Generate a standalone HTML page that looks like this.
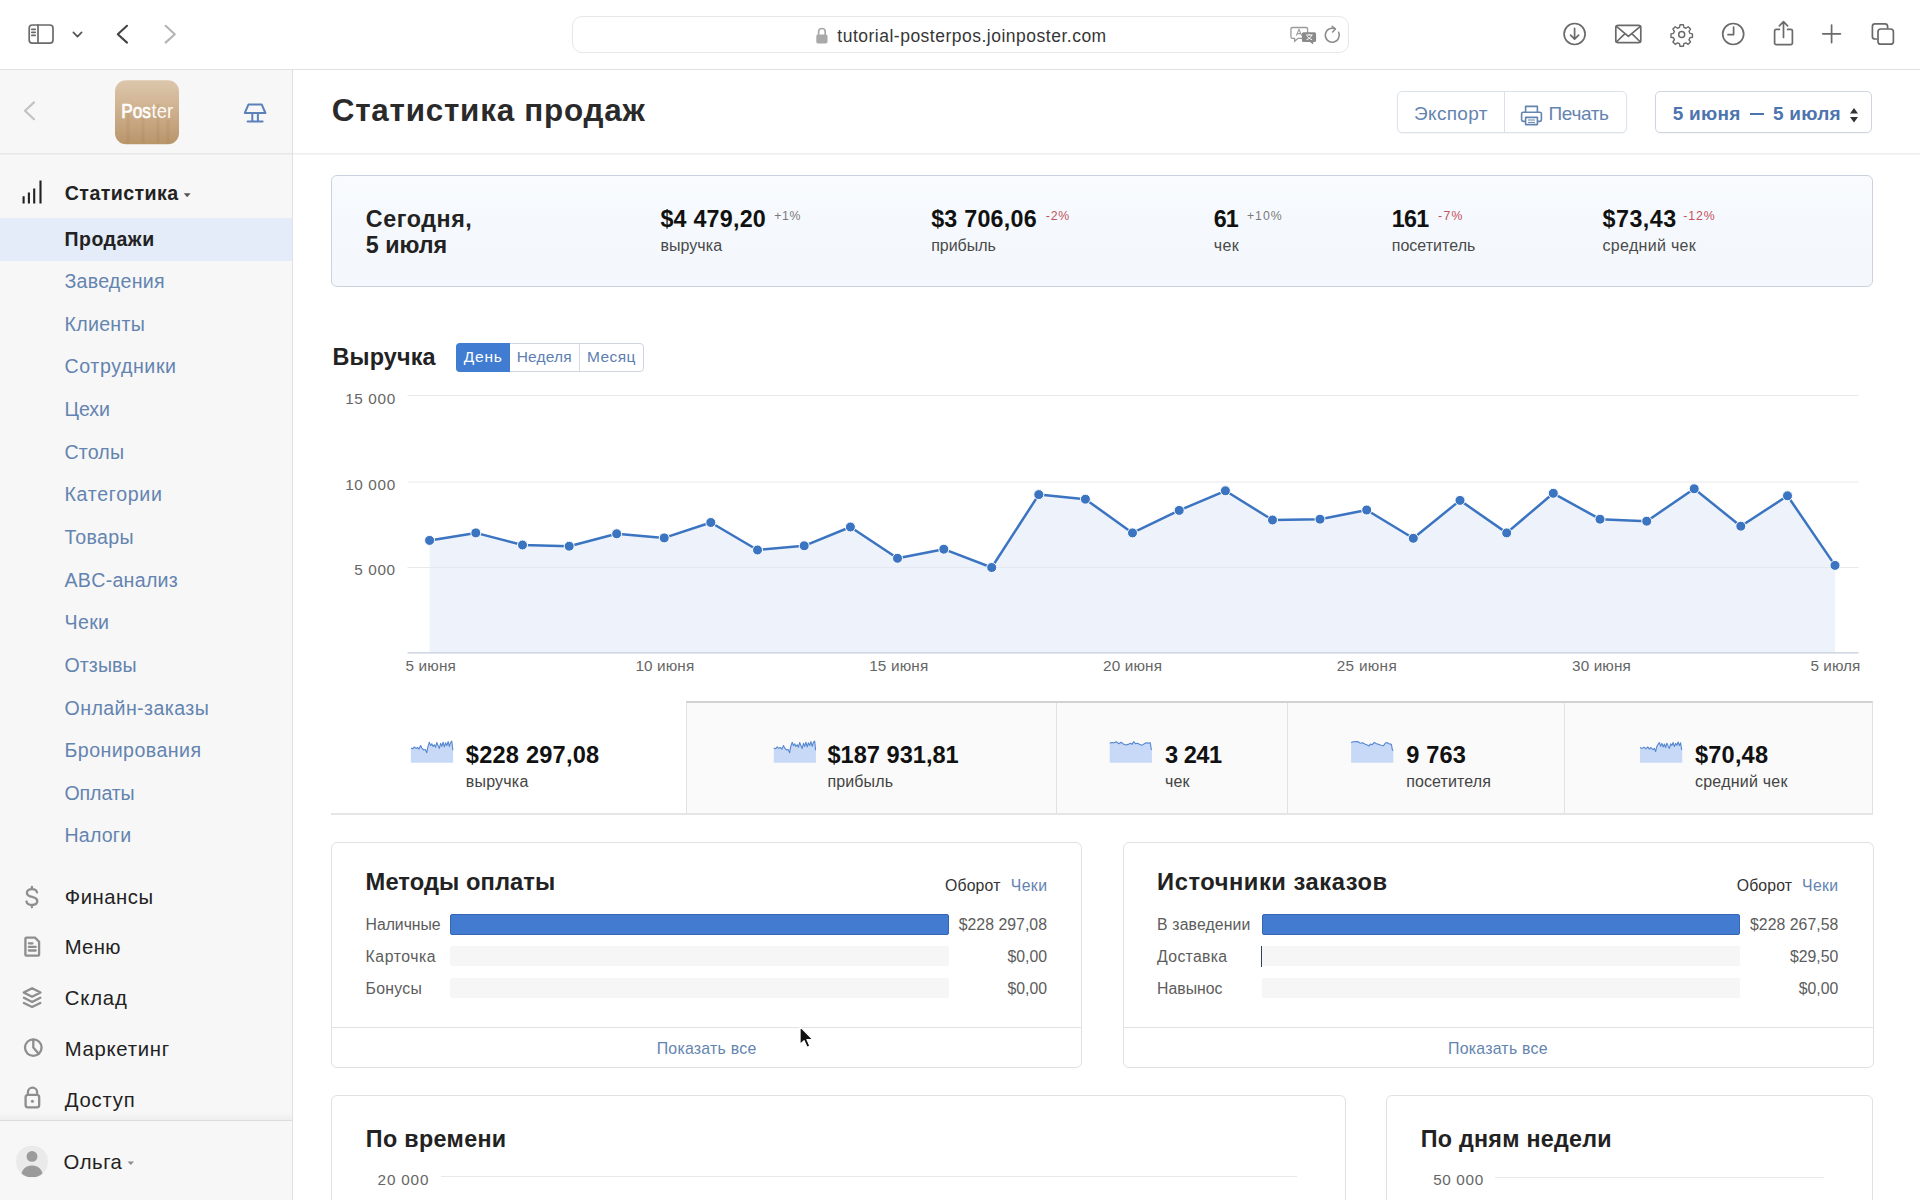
<!DOCTYPE html>
<html lang="ru">
<head>
<meta charset="utf-8">
<title>Статистика продаж</title>
<style>
*{box-sizing:border-box;margin:0;padding:0}
html,body{width:1920px;height:1200px;overflow:hidden;background:#fff}
body{font-family:"Liberation Sans",sans-serif;color:#222;position:relative}
.abs{position:absolute}
.t{position:absolute;white-space:nowrap;line-height:1}
svg{position:absolute;overflow:visible}
#tb{position:absolute;left:0;top:0;width:1920px;height:70px;background:#fff;border-bottom:1px solid #e0e0e0}
#url{position:absolute;left:572px;top:16px;width:777px;height:37px;border:1px solid #e7e7e7;border-radius:10px;background:#fff}
#sb{position:absolute;left:0;top:70px;width:293px;height:1130px;background:#f7f7f7;border-right:1px solid #e0e0e0}
#sbh{position:absolute;left:0;top:153px;width:292px;height:2px;background:linear-gradient(#e7e7e7 50%,#eeeeee 50%)}
#sel{position:absolute;left:0;top:218px;width:292px;height:42.5px;background:#e3ecf8}
#sbdiv{position:absolute;left:0;top:1112px;width:292px;height:9px;border-bottom:1px solid #dcdcdc;background:linear-gradient(#f7f7f7,#efefef)}
#mh{position:absolute;left:293px;top:153px;width:1627px;height:2px;background:linear-gradient(#efefef 50%,#f4f4f4 50%)}
#today{position:absolute;left:331px;top:175px;width:1542px;height:112px;background:linear-gradient(#f9fbfe,#f5f9fd 40%,#f4f8fd);border:1px solid #cbd1e0;border-radius:6px}
.btn{position:absolute;border:1px solid #dce2ec;border-radius:5px;background:#fff;box-shadow:0 1px 1px rgba(0,0,0,.04)}
.card{position:absolute;border:1px solid #e1e1e1;border-radius:6px;background:#fff}
</style>
</head>
<body>
<!-- ===== BROWSER TOOLBAR ===== -->
<div id="tb"></div>
<div id="url"></div>
<svg style="left:0;top:0" width="320" height="70" viewBox="0 0 320 70">
<rect x="29.2" y="25" width="23.8" height="18.2" rx="3.2" fill="none" stroke="#6a6a6a" stroke-width="1.7" stroke-linecap="round" stroke-linejoin="round" stroke-width="1.9"/>
<path d="M38 25.2V43" fill="none" stroke="#6a6a6a" stroke-width="1.7" stroke-linecap="round" stroke-linejoin="round" stroke-width="1.7"/>
<path d="M31.8 29.3h3.4M31.8 32.3h3.4M31.8 35.3h3.4" fill="none" stroke="#6a6a6a" stroke-width="1.7" stroke-linecap="round" stroke-linejoin="round" stroke-width="1.1"/>
<path d="M73.4 32.4l4.1 4.2 4.1-4.2" fill="none" stroke="#555" stroke-width="1.7" stroke-linecap="round" stroke-linejoin="round"/>
<path d="M127 25.8l-9.2 8.4 9.2 8.4" fill="none" stroke="#444" stroke-width="2.1" stroke-linecap="round" stroke-linejoin="round"/>
<path d="M165.6 25.8l9.2 8.4-9.2 8.4" fill="none" stroke="#b4b4b4" stroke-width="2.1" stroke-linecap="round" stroke-linejoin="round"/>
</svg>
<svg style="left:810px;top:20px" width="30" height="30" viewBox="810 20 30 30">
<path d="M818.6 35v-3.2a3.3 3.3 0 0 1 6.6 0V35" fill="none" stroke="#a9a9a9" stroke-width="1.7"/>
<rect x="816.3" y="34.4" width="11.2" height="9" rx="1.6" fill="#a9a9a9"/>
</svg>
<div class="t" style="left:837.3px;top:28.0px;font-size:17.5px;color:#363636;letter-spacing:0.50px;">tutorial-posterpos.joinposter.com</div>
<svg style="left:1286px;top:20px" width="60" height="30" viewBox="1286 20 60 30">
<path d="M1292.5 27.5h13.5a1.6 1.6 0 0 1 1.6 1.6v7.6a1.6 1.6 0 0 1-1.6 1.6h-8l-3.4 3v-3h-2.1a1.6 1.6 0 0 1-1.6-1.6v-7.6a1.6 1.6 0 0 1 1.6-1.6z" fill="#fff" stroke="#9a9a9a" stroke-width="1.3"/>
<path d="M1296.3 35.6l2.7-6.2 2.7 6.2M1297.3 33.6h3.4" fill="none" stroke="#9a9a9a" stroke-width="1.1"/>
<path d="M1303.5 32.2h11a1.6 1.6 0 0 1 1.6 1.6v6.6a1.6 1.6 0 0 1-1.6 1.6h-1.3v2.6l-3.2-2.6h-6.5a1.6 1.6 0 0 1-1.6-1.6v-6.6a1.6 1.6 0 0 1 1.6-1.6z" fill="#8a8a8a"/>
<path d="M1306 35h6.6M1309.3 34v1M1311.6 35c-.6 2.2-2.6 4-5 4.6M1307.3 36.2c.8 1.6 2.6 2.9 4.8 3.4" fill="none" stroke="#fff" stroke-width="1"/>
<path d="M1338.6 32.2a7 7 0 1 1-3.6-3.4" fill="none" stroke="#8a8a8a" stroke-width="1.5" stroke-linecap="round"/>
<path d="M1332.2 26.4l3.3 2.6-2.9 3" fill="none" stroke="#8a8a8a" stroke-width="1.5" stroke-linecap="round" stroke-linejoin="round"/>
</svg>
<svg style="left:1540px;top:0" width="380" height="70" viewBox="1540 0 380 70">
<circle cx="1574.6" cy="34" r="10.5" fill="none" stroke="#6a6a6a" stroke-width="1.7" stroke-linecap="round" stroke-linejoin="round"/>
<path d="M1574.6 28.4v10.6M1570.6 35.2l4 4 4-4" fill="none" stroke="#6a6a6a" stroke-width="1.7" stroke-linecap="round" stroke-linejoin="round"/>
<rect x="1615.8" y="25.4" width="25" height="17.2" rx="2.4" fill="none" stroke="#6a6a6a" stroke-width="1.7" stroke-linecap="round" stroke-linejoin="round"/>
<path d="M1616.4 26.4l12 10 12-10M1616.4 42l8.6-8.4M1640.4 42l-8.6-8.4" fill="none" stroke="#6a6a6a" stroke-width="1.7" stroke-linecap="round" stroke-linejoin="round" stroke-width="1.4"/>
<g transform="translate(1681.7 34.4) scale(.88)" fill="none" stroke="#6a6a6a" stroke-width="1.7" stroke-linecap="round" stroke-linejoin="round">
<circle r="3.4"/>
<path d="M-1.9 -10.9h3.8l.6 2.9 2.3 1 2.5-1.7 2.7 2.7-1.7 2.5 1 2.3 2.9.6v3.8l-2.9.6-1 2.3 1.7 2.5-2.7 2.7-2.5-1.7-2.3 1-.6 2.9h-3.8l-.6-2.9-2.3-1-2.5 1.7-2.7-2.7 1.7-2.5-1-2.3-2.9-.6v-3.8l2.9-.6 1-2.3-1.7-2.5 2.7-2.7 2.5 1.7 2.3-1z" stroke-width="1.6"/>
</g>
<circle cx="1733.2" cy="34" r="10.5" fill="none" stroke="#6a6a6a" stroke-width="1.7" stroke-linecap="round" stroke-linejoin="round"/>
<path d="M1733.6 27.2v7.4h-5.6" fill="none" stroke="#6a6a6a" stroke-width="1.7" stroke-linecap="round" stroke-linejoin="round"/>
<path d="M1779.4 29.4h-3.2a1.6 1.6 0 0 0-1.6 1.6v12a1.6 1.6 0 0 0 1.6 1.6h14.6a1.6 1.6 0 0 0 1.6-1.6v-12a1.6 1.6 0 0 0-1.6-1.6h-3.2" fill="none" stroke="#6a6a6a" stroke-width="1.7" stroke-linecap="round" stroke-linejoin="round"/>
<path d="M1783.5 37.4V22M1779.4 25.8l4.1-4.1 4.1 4.1" fill="none" stroke="#6a6a6a" stroke-width="1.7" stroke-linecap="round" stroke-linejoin="round"/>
<path d="M1831.6 25v17.6M1822.8 33.8h17.6" fill="none" stroke="#6a6a6a" stroke-width="1.7" stroke-linecap="round" stroke-linejoin="round" stroke-width="1.8"/>
<path d="M1876.6 39h-1.6a2.6 2.6 0 0 1-2.6-2.6v-10a2.6 2.6 0 0 1 2.6-2.6h10a2.6 2.6 0 0 1 2.6 2.6v1.6" fill="none" stroke="#6a6a6a" stroke-width="1.7" stroke-linecap="round" stroke-linejoin="round"/>
<rect x="1878" y="29" width="15.4" height="15.2" rx="2.8" fill="none" stroke="#6a6a6a" stroke-width="1.7" stroke-linecap="round" stroke-linejoin="round"/>
</svg>
<!-- ===== SIDEBAR ===== -->
<div id="sb"></div>
<div id="sbh"></div>
<div id="sel"></div>
<svg style="left:0;top:70px" width="292" height="84" viewBox="0 70 292 84">
<path d="M34 102.4l-9 8.4 9 8.4" fill="none" stroke="#c2c2c2" stroke-width="2.2" stroke-linecap="round" stroke-linejoin="round"/>
<defs><linearGradient id="wood" x1="0" y1="0" x2="0" y2="1"><stop offset="0" stop-color="#dcc7ac"/><stop offset=".45" stop-color="#cfb18f"/><stop offset="1" stop-color="#b9956a"/></linearGradient></defs>
<rect x="115" y="80.3" width="64" height="64" rx="11" fill="url(#wood)"/>
<g opacity=".10" stroke="#8a6238" stroke-width="3"><path d="M128 112v31M143 118v25M158 104v39M168 120v23"/></g>
<g fill="none" stroke="#5c80b8" stroke-width="2" stroke-linejoin="round" stroke-linecap="round">
<path d="M248.4 104.6h13.4l3.6 8.4h-20.6z"/><path d="M252.3 113.4v7.8M257.9 113.4v7.8M247.6 121.6h15"/></g>
</svg>
<svg style="left:115px;top:98px" width="64" height="26" viewBox="115 98 64 26"><text x="121.3" y="117.9" font-family="Liberation Sans, sans-serif" font-size="19.6" fill="#fff" stroke="#fff" stroke-width=".7" textLength="29.6" lengthAdjust="spacingAndGlyphs">Pos</text><text x="151.5" y="117.9" font-family="Liberation Sans, sans-serif" font-size="19.6" fill="#fff" fill-opacity=".95" textLength="21.6" lengthAdjust="spacingAndGlyphs">ter</text></svg>
<svg style="left:0;top:170px" width="60" height="40" viewBox="0 170 60 40">
<path d="M23.6 196.2v7.4M28.9 192.4v11.2M34.2 188.6v15M40.5 180.6v23" fill="none" stroke="#222" stroke-width="2.1"/></svg>
<div class="t" style="left:64.8px;top:184.0px;font-size:19.6px;font-weight:bold;color:#222;letter-spacing:0.42px;">Статистика</div>
<svg style="left:183px;top:190px" width="10" height="10" viewBox="183 190 10 10"><path d="M183.8 193.2h6.8l-3.4 4z" fill="#555"/></svg>
<div class="t" style="left:64.5px;top:230.0px;font-size:19.5px;font-weight:bold;color:#222;letter-spacing:0.50px;">Продажи</div>
<div class="t" style="left:64.5px;top:272.0px;font-size:19.6px;color:#6484b0;letter-spacing:0.24px;">Заведения</div>
<div class="t" style="left:64.5px;top:315.0px;font-size:19.6px;color:#6484b0;letter-spacing:0.29px;">Клиенты</div>
<div class="t" style="left:64.5px;top:357.0px;font-size:19.6px;color:#6484b0;letter-spacing:0.60px;">Сотрудники</div>
<div class="t" style="left:64.5px;top:400.0px;font-size:19.6px;color:#6484b0;letter-spacing:-0.10px;">Цехи</div>
<div class="t" style="left:64.5px;top:443.0px;font-size:19.6px;color:#6484b0;letter-spacing:0.15px;">Столы</div>
<div class="t" style="left:64.5px;top:485.0px;font-size:19.6px;color:#6484b0;letter-spacing:0.68px;">Категории</div>
<div class="t" style="left:64.5px;top:528.0px;font-size:19.6px;color:#6484b0;letter-spacing:0.34px;">Товары</div>
<div class="t" style="left:64.5px;top:571.0px;font-size:19.6px;color:#6484b0;letter-spacing:0.28px;">ABC-анализ</div>
<div class="t" style="left:64.5px;top:613.0px;font-size:19.6px;color:#6484b0;letter-spacing:0.34px;">Чеки</div>
<div class="t" style="left:64.5px;top:656.0px;font-size:19.6px;color:#6484b0;letter-spacing:0.08px;">Отзывы</div>
<div class="t" style="left:64.5px;top:699.0px;font-size:19.6px;color:#6484b0;letter-spacing:0.41px;">Онлайн-заказы</div>
<div class="t" style="left:64.5px;top:741.0px;font-size:19.6px;color:#6484b0;letter-spacing:0.44px;">Бронирования</div>
<div class="t" style="left:64.5px;top:784.0px;font-size:19.6px;color:#6484b0;letter-spacing:-0.12px;">Оплаты</div>
<div class="t" style="left:64.5px;top:826.0px;font-size:19.6px;color:#6484b0;letter-spacing:0.18px;">Налоги</div>
<div class="t" style="left:64.7px;top:887.0px;font-size:20.3px;color:#222;letter-spacing:0.54px;">Финансы</div>
<div class="t" style="left:64.7px;top:937.0px;font-size:20.3px;color:#222;letter-spacing:0.29px;">Меню</div>
<div class="t" style="left:64.7px;top:988.0px;font-size:20.3px;color:#222;letter-spacing:0.85px;">Склад</div>
<div class="t" style="left:64.7px;top:1039.0px;font-size:20.3px;color:#222;letter-spacing:0.72px;">Маркетинг</div>
<div class="t" style="left:64.7px;top:1090.0px;font-size:20.3px;color:#222;letter-spacing:0.79px;">Доступ</div>
<svg style="left:0;top:880px" width="60" height="240" viewBox="0 880 60 240">
<path d="M37 892.400c-.4-2.100-2.300-3.300-5.100-3.300-3 0-5 1.500-5 3.800 0 5.400 10.400 2.700 10.400 8.200 0 2.400-2.100 3.900-5.300 3.900-3 0-5-1.300-5.500-3.500M31.900 886.800v2.200M31.900 905.100v2.200" fill="none" stroke="#8e8e8e" stroke-width="2.3" stroke-linecap="round" stroke-linejoin="round"/>
<path d="M25.400 938.600a1 1 0 0 1 1-1h8.600l4.100 4.100v13a1 1 0 0 1-1 1h-11.700a1 1 0 0 1-1-1z" fill="none" stroke="#8e8e8e" stroke-width="2.3" stroke-linecap="round" stroke-linejoin="round"/>
<path d="M28.900 943.300h3.600M28.900 946.900h6.800M28.900 950.500h6.800" fill="none" stroke="#8e8e8e" stroke-width="2.3" stroke-linecap="round" stroke-linejoin="round" stroke-width="1.8"/>
<path d="M32.100 988.200l8.400 4.300-8.400 4.300-8.400-4.300z" fill="none" stroke="#8e8e8e" stroke-width="2.3" stroke-linecap="round" stroke-linejoin="round"/><path d="M23.900 997.800l8.200 4.200 8.200-4.200M23.900 1002.900l8.200 4.200 8.200-4.200" fill="none" stroke="#8e8e8e" stroke-width="2.3" stroke-linecap="round" stroke-linejoin="round"/>
<circle cx="33.300" cy="1047.600" r="8.300" fill="none" stroke="#8e8e8e" stroke-width="2.3" stroke-linecap="round" stroke-linejoin="round"/><path d="M33.300 1039.600v8l5.400 6.200" fill="none" stroke="#8e8e8e" stroke-width="2.3" stroke-linecap="round" stroke-linejoin="round"/>
<rect x="25.600" y="1094.800" width="13.600" height="12.600" rx="2.400" fill="none" stroke="#8e8e8e" stroke-width="2.3" stroke-linecap="round" stroke-linejoin="round"/><path d="M27.900 1094.600v-2.400a4.600 4.600 0 0 1 9.200 0v1" fill="none" stroke="#8e8e8e" stroke-width="2.3" stroke-linecap="round" stroke-linejoin="round"/><circle cx="32.400" cy="1101.300" r="1.500" fill="#8e8e8e"/>
</svg>
<div id="sbdiv"></div>
<svg style="left:14px;top:1144px" width="36" height="36" viewBox="14 1144 36 36">
<defs><clipPath id="avc"><circle cx="32" cy="1161.4" r="16"/></clipPath></defs>
<circle cx="32" cy="1161.4" r="16" fill="#eaeaea"/>
<g clip-path="url(#avc)" fill="#9b9b9b"><circle cx="32" cy="1156.4" r="5.4"/><path d="M21 1177c0-7 4.6-11.4 11-11.4s11 4.400 11 11.400z"/></g></svg>
<div class="t" style="left:63.6px;top:1152.0px;font-size:20.3px;color:#222;letter-spacing:0.53px;">Ольга</div>
<svg style="left:126px;top:1158px" width="10" height="10" viewBox="126 1158 10 10"><path d="M127.600 1161.400h6.400l-3.200 3.700z" fill="#8c8c8c"/></svg>
<!-- ===== MAIN HEADER ===== -->
<div id="mh"></div>
<div class="t" style="left:331.7px;top:95.0px;font-size:31.4px;font-weight:bold;color:#2a2a2a;letter-spacing:0.77px;">Статистика продаж</div>
<div class="btn" style="left:1397px;top:91px;width:230px;height:42px"></div><div class="abs" style="left:1504px;top:92px;width:1px;height:40px;background:#d9e0ea"></div>
<div class="t" style="left:1414.0px;top:104.0px;font-size:19px;color:#6484b0;letter-spacing:0.35px;">Экспорт</div>
<svg style="left:1519px;top:103px" width="26" height="26" viewBox="1519 103 26 26"><g fill="none" stroke="#6484b0" stroke-width="1.6" stroke-linejoin="round">
<path d="M1525.6 112v-5.600h11.800v5.600"/><path d="M1525.400 121.400h-2.200a1.600 1.600 0 0 1-1.600-1.600v-6a1.600 1.600 0 0 1 1.600-1.600h16.600a1.600 1.600 0 0 1 1.600 1.600v6a1.600 1.600 0 0 1-1.600 1.600h-2.200"/>
<rect x="1525.600" y="117.400" width="11.800" height="7.200"/><path d="M1528 120h7M1528 122.400h7" stroke-width="1"/></g></svg>
<div class="t" style="left:1548.5px;top:104.0px;font-size:19px;color:#6484b0;letter-spacing:-0.35px;">Печать</div>
<div class="btn" style="left:1655px;top:91px;width:217px;height:42px;border-color:#cfd6e2"></div>
<div class="t" style="left:1672.7px;top:104.0px;font-size:19px;font-weight:bold;color:#4c74ae;letter-spacing:0.27px;">5 июня</div>
<div class="abs" style="left:1750px;top:113px;width:13.5px;height:2px;background:#4c74ae"></div><div class="t" style="left:1773.0px;top:104.0px;font-size:19px;font-weight:bold;color:#4c74ae;letter-spacing:0.25px;">5 июля</div>
<svg style="left:1848px;top:104px" width="12" height="22" viewBox="1848 104 12 22"><path d="M1850 113.400l4-5.400 4 5.400zM1850 117l4 5.400 4-5.400z" fill="#333"/></svg>
<!-- ===== TODAY BOX ===== -->
<div id="today"></div>
<div class="t" style="left:365.8px;top:208.0px;font-size:23.3px;font-weight:bold;color:#222;letter-spacing:0.57px;">Сегодня,</div>
<div class="t" style="left:365.8px;top:234.0px;font-size:23.3px;font-weight:bold;color:#222;letter-spacing:-0.05px;">5 июля</div>
<div class="t" style="left:660.4px;top:208.0px;font-size:23.3px;font-weight:bold;color:#111;letter-spacing:0.22px;">$4 479,20</div>
<div class="t" style="left:774.2px;top:210.0px;font-size:12.3px;color:#7a7a7a;letter-spacing:0.62px;">+1%</div>
<div class="t" style="left:660.4px;top:238.0px;font-size:16px;color:#4a4a4a;letter-spacing:0.06px;">выручка</div>
<div class="t" style="left:931.2px;top:208.0px;font-size:23.3px;font-weight:bold;color:#111;letter-spacing:0.22px;">$3 706,06</div>
<div class="t" style="left:1045.8px;top:210.0px;font-size:12.3px;color:#c2525c;letter-spacing:0.76px;">-2%</div>
<div class="t" style="left:931.2px;top:238.0px;font-size:16px;color:#4a4a4a;letter-spacing:-0.04px;">прибыль</div>
<div class="t" style="left:1213.8px;top:208.0px;font-size:23.3px;font-weight:bold;color:#111;letter-spacing:-0.92px;">61</div>
<div class="t" style="left:1247.0px;top:210.0px;font-size:12.3px;color:#7a7a7a;letter-spacing:0.93px;">+10%</div>
<div class="t" style="left:1213.8px;top:238.0px;font-size:16px;color:#4a4a4a;letter-spacing:0.38px;">чек</div>
<div class="t" style="left:1391.7px;top:208.0px;font-size:23.3px;font-weight:bold;color:#111;letter-spacing:-0.69px;">161</div>
<div class="t" style="left:1438.0px;top:210.0px;font-size:12.3px;color:#c2525c;letter-spacing:1.31px;">-7%</div>
<div class="t" style="left:1391.7px;top:238.0px;font-size:16px;color:#4a4a4a;letter-spacing:0.03px;">посетитель</div>
<div class="t" style="left:1602.5px;top:208.0px;font-size:23.3px;font-weight:bold;color:#111;letter-spacing:0.50px;">$73,43</div>
<div class="t" style="left:1683.3px;top:210.0px;font-size:12.3px;color:#c2525c;letter-spacing:0.86px;">-12%</div>
<div class="t" style="left:1602.5px;top:238.0px;font-size:16px;color:#4a4a4a;letter-spacing:0.31px;">средний чек</div>
<!-- ===== REVENUE CHART ===== -->
<div class="t" style="left:332.5px;top:346.0px;font-size:23.4px;font-weight:bold;color:#222;letter-spacing:0.14px;">Выручка</div>
<div class="abs" style="left:456px;top:343px;width:188px;height:29px;border:1px solid #d0d5de;border-radius:4px;background:#fff"></div><div class="abs" style="left:456px;top:343px;width:54px;height:29px;background:#3f7cd2;border-radius:4px 0 0 4px"></div><div class="abs" style="left:579px;top:344px;width:1px;height:27px;background:#d6dae2"></div>
<div class="t" style="left:463.8px;top:349.0px;font-size:15.5px;color:#fff;letter-spacing:0.74px;">День</div>
<div class="t" style="left:516.7px;top:349.0px;font-size:15.5px;color:#5d7fb2;letter-spacing:0.19px;">Неделя</div>
<div class="t" style="left:587.0px;top:349.0px;font-size:15.5px;color:#5d7fb2;letter-spacing:0.39px;">Месяц</div>
<svg style="left:0;top:0" width="1920" height="700" viewBox="0 0 1920 700">
<path d="M407.5 395.5H1858.5" stroke="#e9e9e9" stroke-width="1" fill="none"/>
<path d="M407.5 482H1858.5" stroke="#e9e9e9" stroke-width="1" fill="none"/>
<path d="M407.5 567.5H1858.5" stroke="#e9e9e9" stroke-width="1" fill="none"/>
<path d="M429.6 540.4 L475.8 532.9 L522.5 545.0 L569.2 546.2 L616.7 533.8 L664.2 537.9 L710.8 522.5 L757.5 550.0 L804.2 545.8 L850.4 527.0 L897.5 558.3 L943.8 549.2 L991.7 567.5 L1038.8 494.6 L1085.4 499.2 L1132.5 532.9 L1179.2 510.4 L1225.4 490.8 L1272.5 520.0 L1320.0 519.2 L1366.7 510.0 L1413.3 538.3 L1460.0 500.4 L1506.7 532.9 L1553.3 493.3 L1600.0 519.2 L1646.7 521.2 L1694.2 488.8 L1740.8 526.2 L1787.5 495.8 L1835.0 565.4 L1835.0 652.5 L429.6 652.5 Z" fill="#dfe8f8" fill-opacity=".55"/>
<path d="M407.5 652.8H1858.5" stroke="#c3cbdb" stroke-width="1.3" fill="none"/>
<path d="M429.6 540.4 L475.8 532.9 L522.5 545.0 L569.2 546.2 L616.7 533.8 L664.2 537.9 L710.8 522.5 L757.5 550.0 L804.2 545.8 L850.4 527.0 L897.5 558.3 L943.8 549.2 L991.7 567.5 L1038.8 494.6 L1085.4 499.2 L1132.5 532.9 L1179.2 510.4 L1225.4 490.8 L1272.5 520.0 L1320.0 519.2 L1366.7 510.0 L1413.3 538.3 L1460.0 500.4 L1506.7 532.9 L1553.3 493.3 L1600.0 519.2 L1646.7 521.2 L1694.2 488.8 L1740.8 526.2 L1787.5 495.8 L1835.0 565.4" fill="none" stroke="#3b74c0" stroke-width="2.5" stroke-linejoin="round" stroke-linecap="round"/>
<circle cx="429.6" cy="540.4" r="5" fill="#3b74c0" stroke="#fff" stroke-width="1"/><circle cx="475.8" cy="532.9" r="5" fill="#3b74c0" stroke="#fff" stroke-width="1"/><circle cx="522.5" cy="545.0" r="5" fill="#3b74c0" stroke="#fff" stroke-width="1"/><circle cx="569.2" cy="546.2" r="5" fill="#3b74c0" stroke="#fff" stroke-width="1"/><circle cx="616.7" cy="533.8" r="5" fill="#3b74c0" stroke="#fff" stroke-width="1"/><circle cx="664.2" cy="537.9" r="5" fill="#3b74c0" stroke="#fff" stroke-width="1"/><circle cx="710.8" cy="522.5" r="5" fill="#3b74c0" stroke="#fff" stroke-width="1"/><circle cx="757.5" cy="550.0" r="5" fill="#3b74c0" stroke="#fff" stroke-width="1"/><circle cx="804.2" cy="545.8" r="5" fill="#3b74c0" stroke="#fff" stroke-width="1"/><circle cx="850.4" cy="527.0" r="5" fill="#3b74c0" stroke="#fff" stroke-width="1"/><circle cx="897.5" cy="558.3" r="5" fill="#3b74c0" stroke="#fff" stroke-width="1"/><circle cx="943.8" cy="549.2" r="5" fill="#3b74c0" stroke="#fff" stroke-width="1"/><circle cx="991.7" cy="567.5" r="5" fill="#3b74c0" stroke="#fff" stroke-width="1"/><circle cx="1038.8" cy="494.6" r="5" fill="#3b74c0" stroke="#fff" stroke-width="1"/><circle cx="1085.4" cy="499.2" r="5" fill="#3b74c0" stroke="#fff" stroke-width="1"/><circle cx="1132.5" cy="532.9" r="5" fill="#3b74c0" stroke="#fff" stroke-width="1"/><circle cx="1179.2" cy="510.4" r="5" fill="#3b74c0" stroke="#fff" stroke-width="1"/><circle cx="1225.4" cy="490.8" r="5" fill="#3b74c0" stroke="#fff" stroke-width="1"/><circle cx="1272.5" cy="520.0" r="5" fill="#3b74c0" stroke="#fff" stroke-width="1"/><circle cx="1320.0" cy="519.2" r="5" fill="#3b74c0" stroke="#fff" stroke-width="1"/><circle cx="1366.7" cy="510.0" r="5" fill="#3b74c0" stroke="#fff" stroke-width="1"/><circle cx="1413.3" cy="538.3" r="5" fill="#3b74c0" stroke="#fff" stroke-width="1"/><circle cx="1460.0" cy="500.4" r="5" fill="#3b74c0" stroke="#fff" stroke-width="1"/><circle cx="1506.7" cy="532.9" r="5" fill="#3b74c0" stroke="#fff" stroke-width="1"/><circle cx="1553.3" cy="493.3" r="5" fill="#3b74c0" stroke="#fff" stroke-width="1"/><circle cx="1600.0" cy="519.2" r="5" fill="#3b74c0" stroke="#fff" stroke-width="1"/><circle cx="1646.7" cy="521.2" r="5" fill="#3b74c0" stroke="#fff" stroke-width="1"/><circle cx="1694.2" cy="488.8" r="5" fill="#3b74c0" stroke="#fff" stroke-width="1"/><circle cx="1740.8" cy="526.2" r="5" fill="#3b74c0" stroke="#fff" stroke-width="1"/><circle cx="1787.5" cy="495.8" r="5" fill="#3b74c0" stroke="#fff" stroke-width="1"/><circle cx="1835.0" cy="565.4" r="5" fill="#3b74c0" stroke="#fff" stroke-width="1"/>
</svg>
<div class="t" style="right:1524.2px;top:391.0px;font-size:15.3px;color:#666;letter-spacing:0.64px;">15 000</div>
<div class="t" style="right:1524.2px;top:477.0px;font-size:15.3px;color:#666;letter-spacing:0.64px;">10 000</div>
<div class="t" style="right:1524.2px;top:562.0px;font-size:15.3px;color:#666;letter-spacing:0.68px;">5 000</div>
<div class="t" style="left:405.4px;top:658.0px;font-size:15.3px;color:#666;letter-spacing:0.18px;">5 июня</div>
<div class="t" style="left:635.4px;top:658.0px;font-size:15.3px;color:#666;letter-spacing:0.13px;">10 июня</div>
<div class="t" style="left:869.2px;top:658.0px;font-size:15.3px;color:#666;letter-spacing:0.16px;">15 июня</div>
<div class="t" style="left:1103.0px;top:658.0px;font-size:15.3px;color:#666;letter-spacing:0.16px;">20 июня</div>
<div class="t" style="left:1336.7px;top:658.0px;font-size:15.3px;color:#666;letter-spacing:0.33px;">25 июня</div>
<div class="t" style="left:1572.0px;top:658.0px;font-size:15.3px;color:#666;letter-spacing:0.13px;">30 июня</div>
<div class="t" style="left:1810.4px;top:658.0px;font-size:15.3px;color:#666;letter-spacing:0.07px;">5 июля</div>
<!-- ===== SUMMARY TABS ===== -->
<div class="abs" style="left:686px;top:701px;width:1187px;height:113px;background:#fafafa;border:1px solid #e2e2e2;border-top:2px solid #d2d2d2"></div>
<div class="abs" style="left:1056px;top:703px;width:1px;height:110px;background:#e2e2e2"></div><div class="abs" style="left:1286.5px;top:703px;width:1px;height:110px;background:#e2e2e2"></div><div class="abs" style="left:1564px;top:703px;width:1px;height:110px;background:#e2e2e2"></div><div class="abs" style="left:331px;top:813px;width:1542px;height:2px;background:linear-gradient(#e6e6e6,#e4e4e4)"></div>
<svg style="left:0;top:730px" width="1920" height="40" viewBox="0 730 1920 40"><path d="M410.9 748.0 L412.8 748.8 L414.3 746.9 L415.9 748.4 L417.5 747.5 L419.0 749.1 L420.6 745.6 L422.1 748.4 L423.7 750.0 L425.3 749.5 L426.8 752.7 L427.8 747.2 L429.3 742.2 L430.6 745.6 L431.8 743.8 L433.1 746.4 L434.3 744.8 L435.6 747.2 L436.8 742.5 L438.1 745.6 L439.3 748.4 L440.6 743.3 L441.8 746.4 L443.1 742.2 L444.3 746.9 L445.6 742.8 L446.8 745.6 L448.1 741.6 L449.3 746.4 L450.6 742.5 L451.8 741.2 L452.8 750.0 L453.1 750.0 L453.1 762.7 L410.9 762.7 Z" fill="#c7d9f6"/><path d="M410.9 748.0 L412.8 748.8 L414.3 746.9 L415.9 748.4 L417.5 747.5 L419.0 749.1 L420.6 745.6 L422.1 748.4 L423.7 750.0 L425.3 749.5 L426.8 752.7 L427.8 747.2 L429.3 742.2 L430.6 745.6 L431.8 743.8 L433.1 746.4 L434.3 744.8 L435.6 747.2 L436.8 742.5 L438.1 745.6 L439.3 748.4 L440.6 743.3 L441.8 746.4 L443.1 742.2 L444.3 746.9 L445.6 742.8 L446.8 745.6 L448.1 741.6 L449.3 746.4 L450.6 742.5 L451.8 741.2 L452.8 750.0 L453.1 750.0" fill="none" stroke="#5587d0" stroke-width="1.1" stroke-linejoin="round"/><path d="M773.8 748.0 L775.6 748.8 L777.2 746.9 L778.8 748.4 L780.3 747.5 L781.9 749.1 L783.4 745.6 L785.0 748.4 L786.6 750.0 L788.1 749.5 L789.7 752.7 L790.6 747.2 L792.2 742.2 L793.4 745.6 L794.7 743.8 L795.9 746.4 L797.2 744.8 L798.4 747.2 L799.7 742.5 L800.9 745.6 L802.2 748.4 L803.4 743.3 L804.7 746.4 L805.9 742.2 L807.2 746.9 L808.4 742.8 L809.7 745.6 L810.9 741.6 L812.2 746.4 L813.4 742.5 L814.7 741.2 L815.6 750.0 L815.9 750.0 L815.9 762.7 L773.8 762.7 Z" fill="#c7d9f6"/><path d="M773.8 748.0 L775.6 748.8 L777.2 746.9 L778.8 748.4 L780.3 747.5 L781.9 749.1 L783.4 745.6 L785.0 748.4 L786.6 750.0 L788.1 749.5 L789.7 752.7 L790.6 747.2 L792.2 742.2 L793.4 745.6 L794.7 743.8 L795.9 746.4 L797.2 744.8 L798.4 747.2 L799.7 742.5 L800.9 745.6 L802.2 748.4 L803.4 743.3 L804.7 746.4 L805.9 742.2 L807.2 746.9 L808.4 742.8 L809.7 745.6 L810.9 741.6 L812.2 746.4 L813.4 742.5 L814.7 741.2 L815.6 750.0 L815.9 750.0" fill="none" stroke="#5587d0" stroke-width="1.1" stroke-linejoin="round"/><path d="M1109.7 743.3 L1111.7 742.5 L1114.1 742.8 L1116.4 741.7 L1118.8 743.8 L1121.1 742.2 L1123.5 744.1 L1125.8 745.0 L1128.1 744.4 L1130.5 743.3 L1132.0 744.4 L1133.6 741.7 L1135.6 743.8 L1137.5 743.3 L1139.9 744.4 L1141.9 745.3 L1143.8 744.1 L1146.1 742.8 L1148.5 743.1 L1150.3 742.8 L1151.3 749.5 L1151.9 749.5 L1151.9 762.7 L1109.7 762.7 Z" fill="#c7d9f6"/><path d="M1109.7 743.3 L1111.7 742.5 L1114.1 742.8 L1116.4 741.7 L1118.8 743.8 L1121.1 742.2 L1123.5 744.1 L1125.8 745.0 L1128.1 744.4 L1130.5 743.3 L1132.0 744.4 L1133.6 741.7 L1135.6 743.8 L1137.5 743.3 L1139.9 744.4 L1141.9 745.3 L1143.8 744.1 L1146.1 742.8 L1148.5 743.1 L1150.3 742.8 L1151.3 749.5 L1151.9 749.5" fill="none" stroke="#5587d0" stroke-width="1.1" stroke-linejoin="round"/><path d="M1351.1 742.5 L1353.1 741.7 L1356.3 741.6 L1358.6 741.9 L1360.2 743.3 L1362.5 742.8 L1364.8 744.1 L1367.2 745.0 L1369.1 745.9 L1370.3 744.1 L1371.9 744.8 L1374.2 742.5 L1376.6 743.8 L1378.9 744.4 L1381.3 745.3 L1383.6 745.6 L1385.2 743.3 L1386.7 742.5 L1389.1 743.8 L1391.4 744.4 L1392.5 750.3 L1393.3 750.3 L1393.3 762.7 L1351.1 762.7 Z" fill="#c7d9f6"/><path d="M1351.1 742.5 L1353.1 741.7 L1356.3 741.6 L1358.6 741.9 L1360.2 743.3 L1362.5 742.8 L1364.8 744.1 L1367.2 745.0 L1369.1 745.9 L1370.3 744.1 L1371.9 744.8 L1374.2 742.5 L1376.6 743.8 L1378.9 744.4 L1381.3 745.3 L1383.6 745.6 L1385.2 743.3 L1386.7 742.5 L1389.1 743.8 L1391.4 744.4 L1392.5 750.3 L1393.3 750.3" fill="none" stroke="#5587d0" stroke-width="1.1" stroke-linejoin="round"/><path d="M1640.0 747.5 L1642.2 748.4 L1644.1 747.2 L1645.9 748.8 L1647.8 746.9 L1649.4 749.1 L1650.9 747.5 L1652.8 749.7 L1654.4 748.4 L1655.6 751.6 L1656.9 746.2 L1658.1 744.4 L1659.4 742.5 L1660.6 746.2 L1661.9 743.4 L1663.1 746.9 L1664.4 744.1 L1665.6 747.5 L1666.9 743.1 L1668.1 745.9 L1669.4 748.4 L1670.6 743.8 L1671.9 745.6 L1673.1 742.5 L1674.4 746.6 L1675.6 743.4 L1676.9 745.3 L1678.1 741.9 L1679.4 745.6 L1680.6 742.8 L1681.6 749.4 L1682.2 749.4 L1682.2 762.7 L1640.0 762.7 Z" fill="#c7d9f6"/><path d="M1640.0 747.5 L1642.2 748.4 L1644.1 747.2 L1645.9 748.8 L1647.8 746.9 L1649.4 749.1 L1650.9 747.5 L1652.8 749.7 L1654.4 748.4 L1655.6 751.6 L1656.9 746.2 L1658.1 744.4 L1659.4 742.5 L1660.6 746.2 L1661.9 743.4 L1663.1 746.9 L1664.4 744.1 L1665.6 747.5 L1666.9 743.1 L1668.1 745.9 L1669.4 748.4 L1670.6 743.8 L1671.9 745.6 L1673.1 742.5 L1674.4 746.6 L1675.6 743.4 L1676.9 745.3 L1678.1 741.9 L1679.4 745.6 L1680.6 742.8 L1681.6 749.4 L1682.2 749.4" fill="none" stroke="#5587d0" stroke-width="1.1" stroke-linejoin="round"/></svg>
<div class="t" style="left:465.8px;top:744.0px;font-size:23.6px;font-weight:bold;color:#111;letter-spacing:0.22px;">$228 297,08</div>
<div class="t" style="left:465.8px;top:774.0px;font-size:16px;color:#444;letter-spacing:0.20px;">выручка</div>
<div class="t" style="left:827.5px;top:744.0px;font-size:23.6px;font-weight:bold;color:#111;">$187 931,81</div>
<div class="t" style="left:827.5px;top:774.0px;font-size:16px;color:#444;letter-spacing:0.11px;">прибыль</div>
<div class="t" style="left:1165.0px;top:744.0px;font-size:23.6px;font-weight:bold;color:#111;letter-spacing:-0.51px;">3 241</div>
<div class="t" style="left:1165.0px;top:774.0px;font-size:16px;color:#444;letter-spacing:0.18px;">чек</div>
<div class="t" style="left:1406.2px;top:744.0px;font-size:23.6px;font-weight:bold;color:#111;letter-spacing:0.14px;">9 763</div>
<div class="t" style="left:1406.2px;top:774.0px;font-size:16px;color:#444;letter-spacing:0.10px;">посетителя</div>
<div class="t" style="left:1695.0px;top:744.0px;font-size:23.6px;font-weight:bold;color:#111;letter-spacing:0.17px;">$70,48</div>
<div class="t" style="left:1695.0px;top:774.0px;font-size:16px;color:#444;letter-spacing:0.23px;">средний чек</div>
<!-- ===== CARDS ===== -->
<div class="card" style="left:331px;top:842px;width:751px;height:226px"></div><div class="abs" style="left:332px;top:1027px;width:749px;height:1px;background:#e2e2e2"></div>
<div class="t" style="left:365.6px;top:871.0px;font-size:23.7px;font-weight:bold;color:#222;letter-spacing:0.07px;">Методы оплаты</div>
<div class="t" style="left:945.0px;top:878.0px;font-size:15.8px;color:#333;letter-spacing:0.16px;">Оборот</div>
<div class="t" style="left:1010.8px;top:878.0px;font-size:15.8px;color:#6484b0;letter-spacing:0.38px;">Чеки</div>
<div class="t" style="left:365.6px;top:917.0px;font-size:15.8px;color:#5c5c5c;letter-spacing:-0.05px;">Наличные</div>
<div class="t" style="right:873.0px;top:917.0px;font-size:15.8px;color:#5c5c5c;letter-spacing:0.04px;">$228 297,08</div>
<div class="abs" style="left:450.4px;top:914.0px;width:498.8px;height:20.600px;background:#427bd0;border:1px solid #3567b6;border-radius:2px"></div>
<div class="t" style="left:365.6px;top:949.0px;font-size:15.8px;color:#5c5c5c;letter-spacing:0.54px;">Карточка</div>
<div class="t" style="right:873.0px;top:949.0px;font-size:15.8px;color:#5c5c5c;">$0,00</div>
<div class="abs" style="left:450.4px;top:945.7px;width:498.8px;height:20.400px;background:#f6f6f6;border-radius:2px"></div>
<div class="t" style="left:365.6px;top:981.0px;font-size:15.8px;color:#5c5c5c;letter-spacing:0.29px;">Бонусы</div>
<div class="t" style="right:873.0px;top:981.0px;font-size:15.8px;color:#5c5c5c;">$0,00</div>
<div class="abs" style="left:450.4px;top:978.0px;width:498.8px;height:20.400px;background:#f6f6f6;border-radius:2px"></div>
<div class="t" style="left:656.7px;top:1041.0px;font-size:15.9px;color:#6484b0;letter-spacing:0.23px;">Показать все</div>
<div class="card" style="left:1122.5px;top:842px;width:751px;height:226px"></div><div class="abs" style="left:1123.5px;top:1027px;width:749px;height:1px;background:#e2e2e2"></div>
<div class="t" style="left:1157.1px;top:871.0px;font-size:23.7px;font-weight:bold;color:#222;letter-spacing:0.55px;">Источники заказов</div>
<div class="t" style="left:1736.7px;top:878.0px;font-size:15.8px;color:#333;letter-spacing:0.16px;">Оборот</div>
<div class="t" style="left:1802.0px;top:878.0px;font-size:15.8px;color:#6484b0;letter-spacing:0.38px;">Чеки</div>
<div class="t" style="left:1157.1px;top:917.0px;font-size:15.8px;color:#5c5c5c;letter-spacing:0.13px;">В заведении</div>
<div class="t" style="right:81.7px;top:917.0px;font-size:15.8px;color:#5c5c5c;letter-spacing:0.04px;">$228 267,58</div>
<div class="abs" style="left:1261.7px;top:914.0px;width:478px;height:20.600px;background:#427bd0;border:1px solid #3567b6;border-radius:2px"></div>
<div class="t" style="left:1157.1px;top:949.0px;font-size:15.8px;color:#5c5c5c;letter-spacing:0.31px;">Доставка</div>
<div class="t" style="right:81.7px;top:949.0px;font-size:15.8px;color:#5c5c5c;">$29,50</div>
<div class="abs" style="left:1261.7px;top:945.7px;width:478px;height:20.400px;background:#f6f6f6;border-radius:2px"></div>
<div class="abs" style="left:1261.2px;top:946.1px;width:1.300px;height:20.600px;background:#2f4266"></div>
<div class="t" style="left:1157.1px;top:981.0px;font-size:15.8px;color:#5c5c5c;">Навынос</div>
<div class="t" style="right:81.7px;top:981.0px;font-size:15.8px;color:#5c5c5c;">$0,00</div>
<div class="abs" style="left:1261.7px;top:978.0px;width:478px;height:20.400px;background:#f6f6f6;border-radius:2px"></div>
<div class="t" style="left:1448.0px;top:1041.0px;font-size:15.9px;color:#6484b0;letter-spacing:0.23px;">Показать все</div>
<div class="card" style="left:331px;top:1095px;width:1015px;height:140px"></div>
<div class="card" style="left:1386px;top:1095px;width:487px;height:140px"></div>
<div class="t" style="left:365.8px;top:1128.0px;font-size:23.3px;font-weight:bold;color:#222;letter-spacing:0.35px;">По времени</div>
<div class="t" style="left:1420.8px;top:1128.0px;font-size:23.3px;font-weight:bold;color:#222;letter-spacing:0.25px;">По дням недели</div>
<div class="t" style="right:1490.8px;top:1172.0px;font-size:15.3px;color:#666;letter-spacing:0.80px;">20 000</div>
<div class="t" style="right:436.2px;top:1172.0px;font-size:15.3px;color:#666;letter-spacing:0.64px;">50 000</div>
<div class="abs" style="left:441px;top:1176px;width:856px;height:1px;background:#e9e9e9"></div><div class="abs" style="left:1495px;top:1177px;width:329px;height:1px;background:#e9e9e9"></div>
<svg style="left:796px;top:1024px" width="22" height="28" viewBox="796 1024 22 28"><path d="M800 1026.600v17.800l4.100-3.700 2.900 6.600 2.900-1.300-2.900-6.400 5.600-.3z" fill="#111" stroke="#fff" stroke-width="1.3" stroke-linejoin="round"/></svg>
</body>
</html>
